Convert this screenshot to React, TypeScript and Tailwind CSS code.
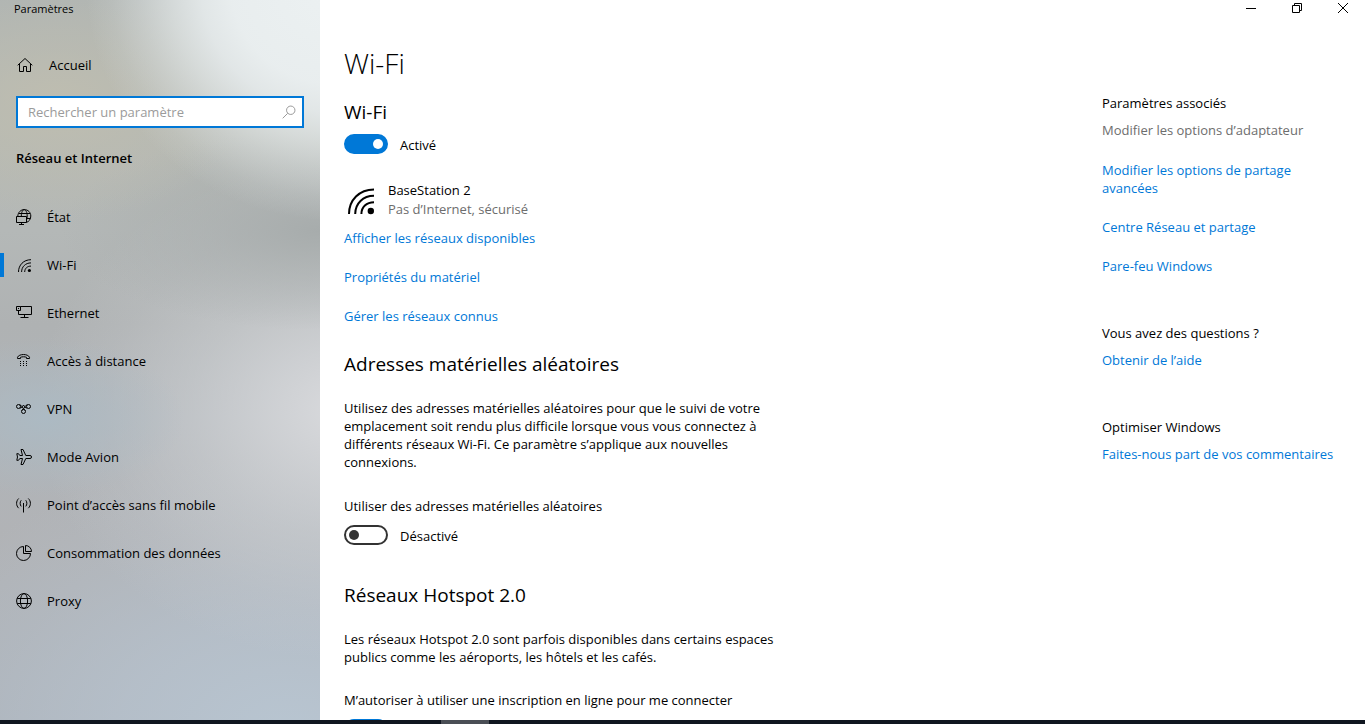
import type { ReactNode } from "react";

interface NavItem {
  label: string;
  icon: ReactNode;
  active?: boolean;
}

interface IconProps {
  children: ReactNode;
  className?: string;
}

function Icon({ children, className = "w-4 h-4" }: IconProps) {
  return (
    <svg
      viewBox="0 0 16 16"
      fill="none"
      stroke="currentColor"
      aria-hidden="true"
      className={`flex-shrink-0 ${className}`}
    >
      {children}
    </svg>
  );
}

const wifiShape = (
  <>
    <path d="M2.5 15C2.5 8 7.6 2.7 15 2.7M5.6 15C5.6 9.8 9.5 5.9 15 5.9M8.7 15C8.7 11.5 11.2 9.1 15 9.1" />
    <circle cx="13.4" cy="13.5" r="1.6" fill="currentColor" stroke="none" />
  </>
);

const navItems: NavItem[] = [
  {
    label: "État",
    icon: (
      <Icon>
        <path d="M1.8 7C2.1 3.2 4.8.6 8.3.6c3.7 0 6.5 2.8 6.5 6.4 0 3.4-2 5.8-4.3 6.3M2.7 4.5h11.4M10.5 9.5h4M5.3 7C5.4 3.4 6.5.7 8.2.7S11.2 3.5 11.2 7c0 1.2-.1 2.4-.4 3.5" />
        <path d="M.5 7.5h10v6H.5zM5.5 13.5v2M3 15.5h5" />
      </Icon>
    ),
  },
  { label: "Wi-Fi", icon: <Icon>{wifiShape}</Icon>, active: true },
  {
    label: "Ethernet",
    icon: (
      <Icon>
        <path d="M4.5 1.5h11v8h-11M2.5 6v3.5h3M8.5 9.5v3M4.5 12.5h8M.5 1.5h4v4h-4zM2.5 3v1" />
      </Icon>
    ),
  },
  {
    label: "Accès à distance",
    icon: (
      <Icon>
        <path d="M1.5 5.5V4.3C3 .6 12 .6 13.500 4.300v1.200h-3V4.300c-1.500-.7-4.500-.7-6 0v1.200z" />
        <path strokeDasharray="1 2" d="M4 8.5h7M4 10.5h7M4 12.5h7" />
      </Icon>
    ),
  },
  {
    label: "VPN",
    icon: (
      <Icon>
        <circle cx="2.5" cy="5.5" r="2" />
        <circle cx="12.5" cy="5.5" r="2" />
        <circle cx="7.5" cy="10.5" r="2" />
        <path d="M3.6 3.800C5.800 3.800 6.500 7.500 9.200 9.500M11.400 3.800C9.200 3.800 8.500 7.500 5.800 9.500M4 7c1.500 0 2.200-1 3.500-3M11 7c-1.500 0-2.200-1-3.500-3" />
      </Icon>
    ),
  },
  {
    label: "Mode Avion",
    icon: (
      <Icon>
        <path d="M9.8 6.5H14a1.5 1.5 0 0 1 0 3H9.8L7 15.5H5l1.5-6H3.8L2.5 11.3H.8L1.5 8 .8 4.7h1.7l1.3 1.8h2.7L5 .5h2z" />
      </Icon>
    ),
  },
  {
    label: "Point d’accès sans fil mobile",
    icon: (
      <Icon>
        <path d="M7.5 6v9.5M5.2 3.3c-1.4 1.7-1.4 4.4 0 6.1M9.8 3.3c1.4 1.7 1.4 4.4 0 6.1M2.7 1.5C-.1 4-.1 8.7 2.7 11.2M12.3 1.5c2.8 2.5 2.8 7.2 0 9.7" />
      </Icon>
    ),
  },
  {
    label: "Consommation des données",
    icon: (
      <Icon>
        <path d="M7.5 1.5A7 7 0 1 0 14.5 8.5h-7z" />
        <path d="M9.5.5a6 6 0 0 1 6 6h-6z" />
      </Icon>
    ),
  },
  {
    label: "Proxy",
    icon: (
      <Icon>
        <circle cx="8" cy="8" r="7.4" />
        <ellipse cx="8" cy="8" rx="3.6" ry="7.4" />
        <path d="M1.2 5.5h13.6M1.2 10.5h13.6" />
      </Icon>
    ),
  },
];

function Sidebar() {
  return (
    <aside className="w-80 flex-shrink-0 bg-[radial-gradient(ellipse_250px_235px_at_105%_-2%,#ecf1f2_0%,#eaeff0f8_42%,#e6ebece8_54%,#e2e7e7b8_66%,#dde2e278_78%,#d8dddd30_90%,#d4d9d900_100%),radial-gradient(ellipse_190px_120px_at_18%_14%,#bebdb0_0%,#bebdb080_45%,#bebdb000_100%),radial-gradient(ellipse_140px_80px_at_14%_58%,#acbac3_0%,#acbac380_45%,#acbac300_100%),radial-gradient(ellipse_260px_100px_at_100%_32%,#a7acac_0%,#a7acac90_40%,#a7acac00_100%),radial-gradient(ellipse_310px_250px_at_108%_57%,#d9dadd_0%,#d5d7dac8_25%,#d1d4d780_50%,#cdd0d430_78%,#cacdd100_100%),radial-gradient(ellipse_420px_280px_at_90%_102%,#b8c5d1_0%,#b8c4d0a8_40%,#b8c4d040_72%,#b8c4d000_100%),linear-gradient(#b0b5b3_0%,#b6b9b3_18%,#b4b8b7_32%,#afb2b3_45%,#b0b4b8_58%,#b1b3b6_75%,#adb3ba_100%)]">
      <div className="flex h-[18px] items-center pl-3.5 text-[11px]">
        Paramètres
      </div>

      <a href="#accueil" className="mt-[23px] flex h-12 items-center gap-4 pl-[17px]">
        <Icon>
          <path d="M.7 8.3 8 1.5l7.3 6.8M2.5 7v7.5h4v-5h3v5h4V7" />
        </Icon>
        Accueil
      </a>

      <label className="mx-4 mt-[7px] flex h-8 items-center border-2 border-[#0078d7] bg-white pl-2.5 pr-1.5">
        <input
          type="text"
          aria-label="Rechercher un paramètre"
          placeholder="Rechercher un paramètre"
          className="min-w-0 flex-1 bg-transparent outline-none placeholder:text-[#9b9b9b]"
        />
        <Icon className="h-3.5 w-3.5 text-[#8c8c8c]">
          <circle cx="10" cy="6" r="4.8" />
          <path d="M6.5 9.5.8 15.2" />
        </Icon>
      </label>

      <h2 className="mt-5 pl-4 font-semibold leading-5">Réseau et Internet</h2>

      <nav className="mt-[25px]">
        {navItems.map((item) => (
          <a
            key={item.label}
            href="#"
            aria-current={item.active ? "page" : undefined}
            className="flex h-12 items-center"
          >
            <span
              className={`h-6 w-1 ${item.active ? "bg-[#0078d7]" : ""}`}
            />
            <span className="flex items-center gap-[15px] pl-3">
              {item.icon}
              {item.label}
            </span>
          </a>
        ))}
      </nav>
    </aside>
  );
}

interface ToggleProps {
  id: string;
  on?: boolean;
  label: string;
  state?: string;
}

function Toggle({ id, on = false, label, state }: ToggleProps) {
  return (
    <div className="flex h-5 items-center gap-3">
      <input
        id={id}
        type="checkbox"
        role="switch"
        aria-label={label}
        defaultChecked={on}
        className="flex h-5 w-11 appearance-none items-center rounded-full border-2 border-[#333] px-[3px] before:h-2.5 before:w-2.5 before:rounded-full before:bg-[#333] checked:justify-end checked:border-[#0078d7] checked:bg-[#0078d7] checked:before:bg-white"
      />
      {state && (
        <label htmlFor={id} className="pt-0.5">
          {state}
        </label>
      )}
    </div>
  );
}

function TextLink({ children }: { children: ReactNode }) {
  return (
    <a href="#" className="block text-[#0078d7]">
      {children}
    </a>
  );
}

function WindowControls() {
  const button = "flex h-4 w-[46px] items-center justify-center";

  return (
    <div className="-mr-px flex justify-end">
      <button type="button" aria-label="Réduire" className={button}>
        <svg viewBox="0 0 10 10" className="h-2.5 w-2.5" stroke="currentColor">
          <path d="M0 5.5h10" />
        </svg>
      </button>
      <button type="button" aria-label="Restaurer" className={button}>
        <svg
          viewBox="0 0 10 10"
          className="h-2.5 w-2.5"
          fill="none"
          stroke="currentColor"
        >
          <path d="M.5 2.5h7v7h-7zM2.5 2.5v-2h7v7h-2" />
        </svg>
      </button>
      <button type="button" aria-label="Fermer" className={button}>
        <svg viewBox="0 0 10 10" className="h-2.5 w-2.5" stroke="currentColor">
          <path d="M0 0l10 10M10 0L0 10" />
        </svg>
      </button>
    </div>
  );
}

export default function App() {
  return (
    <div className="flex h-screen flex-col overflow-hidden bg-white font-['Open_Sans',sans-serif] text-[13px] leading-[18px] text-black">
      <div className="flex min-h-0 flex-1">
        <Sidebar />

        <div className="flex min-w-0 flex-1 flex-col">
          <WindowControls />

          <div className="flex min-h-0 flex-1 justify-between overflow-hidden pl-6">
            <main className="w-[440px] pt-[27px]">
              <h1 className="text-[28px] font-light leading-10">Wi-Fi</h1>

              {/* Connection */}
              <section className="pt-[17px]">
                <h2 className="text-[19px] leading-6">Wi-Fi</h2>
                <div className="mt-2.5">
                  <Toggle id="wifi" on label="Wi-Fi" state="Activé" />
                </div>
                <div className="mt-[27px] flex">
                  <Icon className="mt-[3px] h-8 w-8">{wifiShape}</Icon>
                  <div className="ml-3 leading-[19px]">
                    <p>BaseStation 2</p>
                    <p className="text-[#6d6d6d]">Pas d’Internet, sécurisé</p>
                  </div>
                </div>
                <div className="mt-2.5 space-y-[21px]">
                  <TextLink>Afficher les réseaux disponibles</TextLink>
                  <TextLink>Propriétés du matériel</TextLink>
                  <TextLink>Gérer les réseaux connus</TextLink>
                </div>
              </section>

              {/* Random hardware addresses */}
              <section className="pt-[27px]">
                <h2 className="text-[19px] leading-6">
                  Adresses matérielles aléatoires
                </h2>
                <p className="mt-[23px]">
                  Utilisez des adresses matérielles aléatoires pour que le suivi de votre
                  emplacement soit rendu plus difficile lorsque vous vous connectez à
                  différents réseaux Wi-Fi. Ce paramètre s’applique aux nouvelles
                  connexions.
                </p>
                <p className="mb-2.5 mt-[26px]">
                  Utiliser des adresses matérielles aléatoires
                </p>
                <Toggle
                  id="random-addresses"
                  label="Utiliser des adresses matérielles aléatoires"
                  state="Désactivé"
                />
              </section>

              {/* Hotspot 2.0 */}
              <section className="pt-[38px]">
                <h2 className="text-[19px] leading-6">Réseaux Hotspot 2.0</h2>
                <p className="mt-[23px]">
                  Les réseaux Hotspot 2.0 sont parfois disponibles dans certains espaces
                  publics comme les aéroports, les hôtels et les cafés.
                </p>
                <p className="mb-2.5 mt-[25px]">
                  M’autoriser à utiliser une inscription en ligne pour me connecter
                </p>
                <Toggle
                  id="hotspot"
                  on
                  label="M’autoriser à utiliser une inscription en ligne pour me connecter"
                />
              </section>
            </main>

            <aside className="w-[263px] pr-6 pt-[78px]">
              <h3>Paramètres associés</h3>
              <p className="mt-[9px] text-[#6d6d6d]">
                Modifier les options d’adaptateur
              </p>
              <div className="mt-[22px] space-y-[21px]">
                <TextLink>Modifier les options de partage avancées</TextLink>
                <TextLink>Centre Réseau et partage</TextLink>
                <TextLink>Pare-feu Windows</TextLink>
              </div>

              <h3 className="mb-[9px] mt-[49px]">Vous avez des questions ?</h3>
              <TextLink>Obtenir de l’aide</TextLink>

              <h3 className="mb-[9px] mt-[49px]">Optimiser Windows</h3>
              <TextLink>Faites-nous part de vos commentaires</TextLink>
            </aside>
          </div>
        </div>
      </div>

      {/* Top edge of the taskbar */}
      <div className="flex h-1 flex-shrink-0 bg-[#101620] pl-[441px]">
        <div className="w-12 bg-[#4a4e55]" />
      </div>
    </div>
  );
}
